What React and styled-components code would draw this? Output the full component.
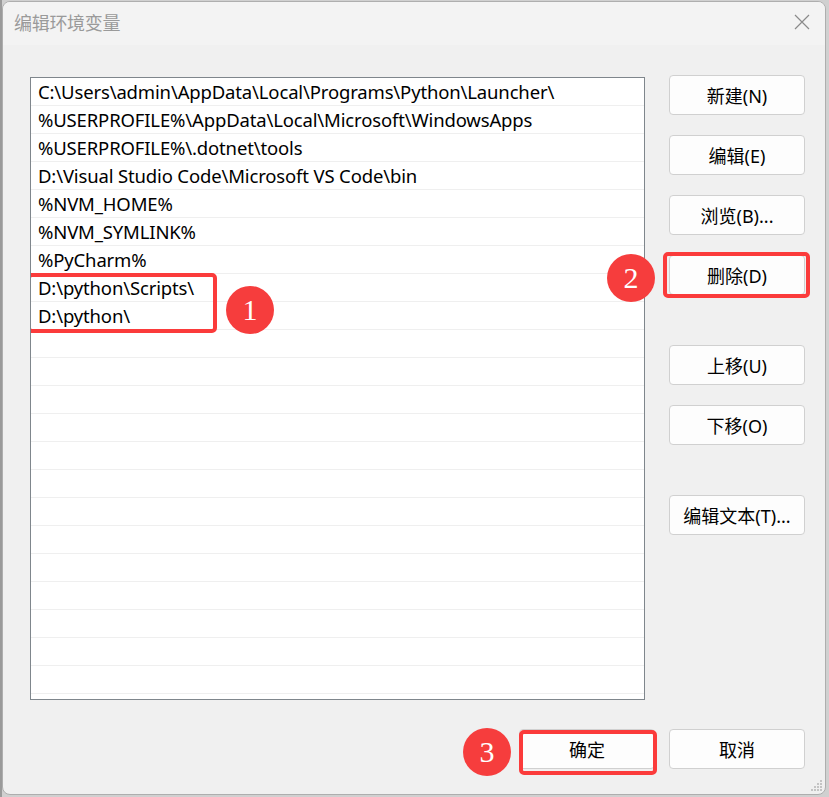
import React from "react";
import styled, { createGlobalStyle } from "styled-components";

const Global = createGlobalStyle`
  html, body { margin: 0; padding: 0; background: #c9c9c9; }
  body { width: 829px; height: 797px; overflow: hidden; font-family: "Noto Sans", "Noto Sans CJK SC", sans-serif; }
`;

const Screen = styled.div`
  width: 829px;
  height: 797px;
  padding: 1px 3px 2px 2px;
  box-sizing: border-box;
  background: linear-gradient(90deg, #9a9a9a 0 2px, #d0d0d0 2px);
`;

const Window = styled.div`
  position: relative;
  height: 100%;
  box-sizing: border-box;
  border: 1px solid #aeaeae;
  border-radius: 8px;
  background: #f0f0f0;
  overflow: hidden;
  display: flex;
  flex-direction: column;
`;

const TitleBar = styled.div`
  height: 43px;
  box-sizing: border-box;
  background: #f3f3f3;
  display: flex;
  align-items: center;
  justify-content: space-between;
  padding: 0 14px 3px 11px;
  flex-shrink: 0;
`;

const Title = styled.div`
  font-family: "Noto Sans CJK SC", sans-serif;
  font-size: 18px;
  color: #9a9a9a;
  letter-spacing: -0.3px;
`;

const Body = styled.div`
  flex: 1;
  display: flex;
  flex-direction: column;
  padding: 32px 20px 0 27px;
`;

const Main = styled.div`
  display: flex;
  gap: 24px;
`;

const List = styled.div`
  position: relative;
  width: 616px;
  height: 623px;
  box-sizing: border-box;
  border: 1px solid #7f868c;
  background: #ffffff;
  overflow: hidden;
`;

const Row = styled.div`
  height: 28px;
  box-sizing: border-box;
  border-bottom: 1px solid #efefef;
  padding: 0 0 1px 7px;
  display: flex;
  align-items: center;
  font-size: 18.5px;
  color: #000;
  white-space: nowrap;
  letter-spacing: -0.15px;
`;

const Side = styled.div`
  display: flex;
  flex-direction: column;
  width: 136px;
  margin-top: -2px;
`;

const Button = styled.div`
  position: relative;
  width: 136px;
  height: 40px;
  box-sizing: border-box;
  margin-top: ${(p) => p.$gap || 0}px;
  background: #fdfdfd;
  border: 1px solid #d0d0d0;
  border-radius: 4px;
  display: flex;
  align-items: center;
  justify-content: center;
  font-size: 18px;
  color: #000;
  font-family: "Noto Sans", "Noto Sans CJK SC", sans-serif;
`;

const Footer = styled.div`
  display: flex;
  justify-content: flex-end;
  gap: 14px;
  margin-top: 29px;
`;

const Highlight = styled.div`
  position: absolute;
  border: 4px solid #fb3b3b;
  border-radius: 5px;
  pointer-events: none;
  left: ${(p) => p.$l}px;
  top: ${(p) => p.$t}px;
  width: ${(p) => p.$w}px;
  height: ${(p) => p.$h}px;
  box-sizing: border-box;
`;

const Badge = styled.div`
  position: absolute;
  left: ${(p) => p.$x - 24}px;
  top: ${(p) => p.$y - 24}px;
  width: 48px;
  height: 48px;
  border-radius: 50%;
  background: #f63d3d;
  color: #fff;
  display: flex;
  align-items: center;
  justify-content: center;
  font-family: "Liberation Serif", serif;
  font-size: 30px;
`;

const Grip = styled.svg`
  position: absolute;
  right: 2px;
  bottom: 2px;
`;

const rows = [
  "C:\\Users\\admin\\AppData\\Local\\Programs\\Python\\Launcher\\",
  "%USERPROFILE%\\AppData\\Local\\Microsoft\\WindowsApps",
  "%USERPROFILE%\\.dotnet\\tools",
  "D:\\Visual Studio Code\\Microsoft VS Code\\bin",
  "%NVM_HOME%",
  "%NVM_SYMLINK%",
  "%PyCharm%",
  "D:\\python\\Scripts\\",
  "D:\\python\\",
];

export default function App() {
  const all = [...rows, ...Array(14).fill("")];
  return (
    <>
      <Global />
      <Screen>
        <Window>
          <TitleBar>
            <Title>编辑环境变量</Title>
            <svg width="18" height="18" viewBox="0 0 18 18">
              <path d="M2 2 L16 16 M16 2 L2 16" stroke="#8a8a8a" strokeWidth="1.2" fill="none" />
            </svg>
          </TitleBar>
          <Body>
            <Main>
              <List>
                {all.map((r, i) => (
                  <Row key={i}>{r}</Row>
                ))}
                <Highlight $l={-4} $t={195} $w={190} $h={60} />
              </List>
              <Side>
                <Button>新建(N)</Button>
                <Button $gap={20}>编辑(E)</Button>
                <Button $gap={20}>浏览(B)...</Button>
                <Button $gap={20}>删除(D)</Button>
                <Button $gap={50}>上移(U)</Button>
                <Button $gap={20}>下移(O)</Button>
                <Button $gap={50}>编辑文本(T)...</Button>
              </Side>
            </Main>
            <Footer>
              <Button>确定</Button>
              <Button>取消</Button>
            </Footer>
          </Body>
          <Highlight $l={660} $t={250} $w={147} $h={46} />
          <Highlight $l={516} $t={728} $w={138} $h={45} />
          <Badge $x={247} $y={308}>1</Badge>
          <Badge $x={628} $y={276}>2</Badge>
          <Badge $x={484} $y={750}>3</Badge>
          <Grip width="12" height="12" viewBox="0 0 12 12">
            <g fill="#c4c4c4">
              <rect x="9" y="0" width="2" height="2" />
              <rect x="6" y="3" width="2" height="2" />
              <rect x="9" y="3" width="2" height="2" />
              <rect x="3" y="6" width="2" height="2" />
              <rect x="6" y="6" width="2" height="2" />
              <rect x="9" y="6" width="2" height="2" />
              <rect x="0" y="9" width="2" height="2" />
              <rect x="3" y="9" width="2" height="2" />
              <rect x="6" y="9" width="2" height="2" />
              <rect x="9" y="9" width="2" height="2" />
            </g>
          </Grip>
        </Window>
      </Screen>
    </>
  );
}
